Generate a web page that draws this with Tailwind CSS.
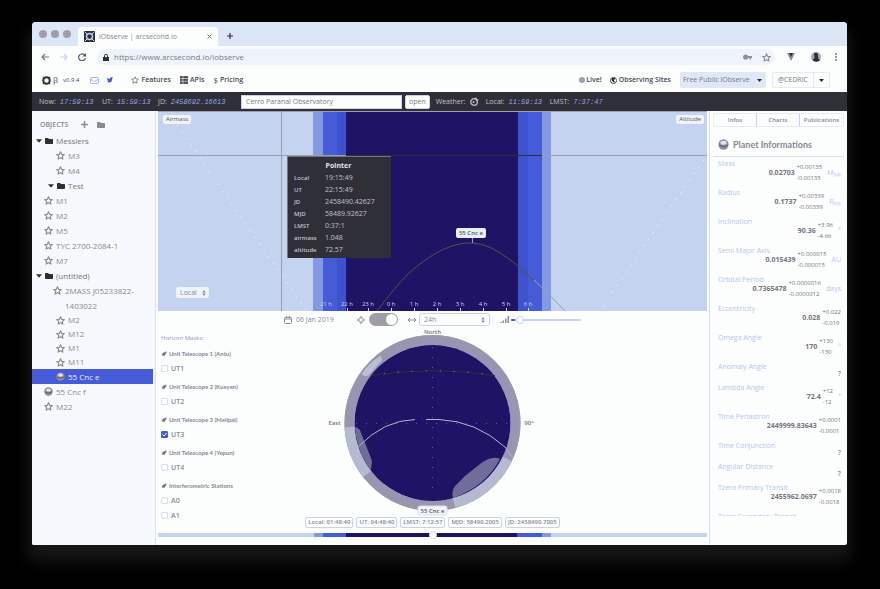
<!DOCTYPE html>
<html lang="en">
<head>
<meta charset="utf-8">
<title>iObserve | arcsecond.io</title>
<script src="https://cdn.jsdelivr.net/npm/@tailwindcss/browser@4"></script>
</head>
<body class="bg-black font-['Open_Sans','Noto_Sans',sans-serif] text-[8px] leading-[10px] text-[#8b8897]">
<svg class="hidden">
  <symbol id="star" viewBox="0 0 16 16"><path d="M8 1.500l2 4.400 4.800.5-3.600 3.200 1 4.800L8 12l-4.200 2.400 1-4.800L1.200 6.400l4.800-.5z" fill="none" stroke="currentColor" stroke-width="2" stroke-linejoin="round"/></symbol>
  <symbol id="folder" viewBox="0 0 16 16"><path d="M0 3.500Q0 2 1.500 2H6l2 2h6.500Q16 4 16 5.500v7q0 1.500-1.500 1.500h-13Q0 14 0 12.500z" fill="currentColor"/></symbol>
  <symbol id="caret" viewBox="0 0 10 6"><path d="M0 0h10L5 6z" fill="currentColor"/></symbol>
  <symbol id="planet" viewBox="0 0 16 16"><circle cx="8" cy="8" r="7.500" fill="#8f8c9b"/><ellipse cx="8" cy="5.500" rx="4.500" ry="3" fill="#dce4f4"/><path d="M2 9q6 4 12 0" stroke="#55535f" stroke-width="1.500" fill="none"/></symbol>
  <symbol id="rocket" viewBox="0 0 16 16"><path d="M15 1Q8 1 5 6L1.500 7 4 9 2 13.500 7 12l2 2.500 1-4Q15 7 15 1z" fill="currentColor"/><circle cx="11" cy="5" r="1.200" fill="#fff"/></symbol>
  <symbol id="updown" viewBox="0 0 6 10"><path d="M0 4h6L3 0zM0 6h6L3 10z" fill="currentColor"/></symbol>
</svg>

<div class="flex h-screen pt-[22px] pr-[33px] pb-11 pl-8">
<div class="flex min-w-0 flex-1 flex-col overflow-hidden rounded-t-[4px] rounded-b-[2px] bg-[#fcfefe] shadow-[0_12px_16px_4px_#171717]">

  <div class="flex h-6 shrink-0 items-end bg-[#dde6f6]">
    <div class="flex gap-1 self-center pl-[7px]">
      <span class="size-2 rounded-full bg-[#a09ca8]"></span><span class="size-2 rounded-full bg-[#a09ca8]"></span><span class="size-2 rounded-full bg-[#a09ca8]"></span>
    </div>
    <div class="ml-[7px] flex h-[19px] w-[140px] items-center rounded-t-[4px] bg-[#fcfefe] px-1.5">
      <svg class="size-[11px]" viewBox="0 0 11 11"><rect width="11" height="11" rx="1" fill="#2f2f38"/><circle cx="5.500" cy="5.500" r="3" fill="none" stroke="#c4d4f0" stroke-width="1.400"/><path d="M1 1l2 2M10 1L8 3M1 10l2-2M10 10L8 8" stroke="#c4d4f0"/></svg>
      <span class="ml-1 flex-1 text-[7px] whitespace-nowrap">iObserve | arcsecond.io</span>
      <button aria-label="Close tab"><svg class="size-[5px]" viewBox="0 0 5 5"><path d="M.5.5l4 4M4.500.5l-4 4" stroke="#77747f"/></svg></button>
    </div>
    <button aria-label="New tab" class="ml-[9px] self-center pt-1"><svg class="size-[6px]" viewBox="0 0 6 6"><path d="M3 0v6M0 3h6" stroke="#2f2f38" stroke-width="1.200"/></svg></button>
  </div>

  <div class="flex h-[22px] shrink-0 items-center pr-2.5 pl-[9px]">
    <svg class="h-2 w-[46px]" viewBox="0 0 46 8" fill="none" stroke-width="1.200"><path d="M8 4H1M4 1L1 4l3 3" stroke="#77747f"/><path d="M19 4h7M23 1l3 3-3 3" stroke="#c4d4f0"/><path d="M43.500 2A3.400 3.400 0 1 0 44.400 5" stroke="#55535f"/><path d="M45 0v3.500h-3.500z" fill="#55535f"/></svg>
    <div class="ml-2.5 flex h-4 flex-1 items-center rounded-full bg-[#eff4fb] pr-1 pl-1.5">
      <svg class="h-[7px] w-[6px]" viewBox="0 0 6 7"><rect y="3" width="6" height="4" fill="#2f2f38"/><path d="M1.500 3V1.800a1.500 1.500 0 0 1 3 0V3" fill="none" stroke="#2f2f38"/></svg>
      <input aria-label="Address" value="https://www.arcsecond.io/iobserve" class="ml-[5px] min-w-0 flex-1 bg-transparent text-[8px] text-[#7b7886] outline-none">
      <svg class="h-[6px] w-[9px]" viewBox="0 0 9 6" fill="#8f8c9b"><circle cx="2.700" cy="3" r="2.600"/><path d="M4 2h5v2H8v1.500H6.500V4H4z"/></svg>
      <svg class="ml-2.5 size-[9px] text-[#8f8c9b]"><use href="#star"/></svg>
    </div>
    <svg class="ml-3 size-[8px]" viewBox="0 0 8 8"><path d="M0 0h8L4 8z" fill="#8f8c9b"/><path d="M2 0h4L4 4z" fill="#2f2f38"/></svg>
    <svg class="ml-4 size-[10px]" viewBox="0 0 10 10"><circle cx="5" cy="5" r="5" fill="#a9a7b3"/><path d="M3 1.500q3-2 4 1V6l2 2.500Q5 11 1.500 8L3.500 6z" fill="#2f2f38"/></svg>
    <svg class="ml-3.5 h-[8px] w-[2px]" viewBox="0 0 2 8" fill="#77747f"><circle cx="1" cy="1" r="1"/><circle cx="1" cy="4" r="1"/><circle cx="1" cy="7" r="1"/></svg>
  </div>

  <nav class="flex h-6 shrink-0 items-center pr-[17px] pl-[10px] text-[7px] font-semibold text-[#4a4855]">
    <svg class="size-[9px]" viewBox="0 0 10 10"><circle cx="5" cy="5" r="3.600" fill="none" stroke="#2f2f38" stroke-width="2.200"/><path d="M1 1l1 1M9 1L8 2M1 9l1-1M9 9L8 8" stroke="#2f2f38" stroke-width="1.200"/></svg>
    <span class="ml-[2px] text-[8px] font-normal">β</span>
    <span class="ml-[5px] text-[6px] font-normal">v0.9.4</span>
    <a href="#" aria-label="Mail" class="ml-[11px]"><svg class="h-[7px] w-[9px]" viewBox="0 0 9 7" fill="none" stroke="#a9b9dd"><rect x=".5" y=".5" width="8" height="6" rx="1"/><path d="M.5 2l4 2.500 4-2.500"/></svg></a>
    <a href="#" aria-label="Twitter" class="ml-2"><svg class="size-[6px]" viewBox="0 0 6 6"><path d="M0 1l2.500 1Q3 0 4.500.3L6 .5 5.200 2Q5 5.500 2 5.500L0 5l1.200-.8Q0 3 0 1z" fill="#455bd8"/></svg></a>
    <a href="#" class="ml-[18px] flex items-center gap-0.5"><svg class="size-[8px] text-[#8b8897]"><use href="#star"/></svg>Features</a>
    <a href="#" class="ml-[9px] flex items-center gap-[2px]"><svg class="size-[8px]" viewBox="0 0 8 8"><path d="M0 0h8v8H0z" fill="#55535f"/><path d="M0 2.500h8M0 5.300h8M3 0v8" stroke="#fff" stroke-width=".5"/></svg>APIs</a>
    <a href="#" class="ml-[9px] flex items-center gap-[2px]"><span class="text-[8px] font-normal">$</span>Pricing</a>
    <span class="flex-1"></span>
    <a href="#" class="flex items-center gap-px"><span class="size-[6px] rounded-full bg-[#a09ca8]"></span>Live!</a>
    <a href="#" class="ml-2 flex items-center gap-[2px]"><svg class="size-[7px]" viewBox="0 0 8 8"><circle cx="4" cy="4" r="3.500" fill="none" stroke="#2f2f38"/><path d="M2 1h4L4.500 4 6 6H4L2 4z" fill="#2f2f38"/></svg>Observing Sites</a>
    <div class="ml-[9px] flex h-4 items-center rounded-[2px] bg-[#dfe8f7] font-normal text-[#7b7886]"><button class="px-[3px] whitespace-nowrap">Free Public iObserve</button><button aria-label="More plans" class="flex h-4 items-center px-1"><svg class="h-[3px] w-[5px] text-[#2f2f38]"><use href="#caret"/></svg></button></div>
    <div class="ml-1.5 flex h-4 items-center rounded-[2px] border border-[#e4ebf7] font-normal text-[#7b7886]"><button class="px-[5px]">@CEDRIC</button><button aria-label="Account menu" class="flex h-3.5 items-center border-l border-[#e4ebf7] px-[5px]"><svg class="h-[3px] w-[5px] text-[#2f2f38]"><use href="#caret"/></svg></button></div>
  </nav>

  <div class="flex h-[19px] shrink-0 items-center bg-[#2f2f38] pl-[7px] text-[7px] whitespace-nowrap text-[#c3c0cb]">
    <div class="flex w-[63px] gap-1">Now: <span class="font-['Liberation_Mono',monospace] italic text-[#98a5e6]">17:59:13</span></div>
    <div class="flex w-[56px] gap-1">UT: <span class="font-['Liberation_Mono',monospace] italic text-[#98a5e6]">15:59:13</span></div>
    <div class="flex w-[83px] gap-1">JD: <span class="font-['Liberation_Mono',monospace] italic text-[#98a5e6]">2458692.16613</span></div>
    <input aria-label="Observatory" value="Cerro Paranal Observatory" class="h-3.5 w-[161px] border border-[#c4d4f0] bg-[#fcfefe] px-1 text-[#7b7886] outline-none">
    <button class="ml-[3px] h-3.5 rounded-[2px] border border-[#c4d4f0] bg-[#fcfefe] px-[3px] text-[#7b7886]">open</button>
    <div class="ml-1.5 flex w-[50px] items-center gap-[5px]">Weather: <svg class="size-[9px]" viewBox="0 0 9 9"><circle cx="4" cy="5" r="3.300" fill="none" stroke="#c3c0cb" stroke-width="1.300"/><path d="M4 2q1-2 3-1.500L6 2l3 .5L7 4z" fill="#c3c0cb"/><circle cx="3.500" cy="5" r="1" fill="#c3c0cb"/></svg></div>
    <div class="flex w-[64px] gap-1">Local: <span class="font-['Liberation_Mono',monospace] italic text-[#98a5e6]">11:59:13</span></div>
    <div class="flex gap-1">LMST: <span class="font-['Liberation_Mono',monospace] italic text-[#98a5e6]">7:37:47</span></div>
  </div>

  <div class="flex min-h-0 flex-1">
    <aside class="w-[124px] shrink-0 border-r border-[#d5e0f4] bg-[#f5f8fd] pt-2 pr-[2px]">
      <div class="flex h-[11px] items-center pl-2 text-[7px] font-semibold"><span class="w-[41px]">OBJECTS</span>
        <button aria-label="Add object"><svg class="size-[7px]" viewBox="0 0 7 7"><path d="M3.500 0v7M0 3.500h7" stroke="currentColor" stroke-width="1.500"/></svg></button>
        <button aria-label="Add folder" class="ml-[9px]"><svg class="size-[8px]"><use href="#folder"/></svg></button></div>
      <ul id="tree" class="mt-[3px] text-[8px]"></ul>
    </aside>

    <main class="flex min-w-0 flex-1 flex-col px-[2px]">
      <div class="relative">
        <svg class="block w-full" viewBox="0 0 549 200" fill="none">
          <path fill="#c4d4f0" d="M0 0h549v200H0z"/>
          <path fill="#8498e4" d="M155 0h238v200H155z"/><path fill="#455bd8" d="M165 0h219v200H165z"/><path fill="#3f52cd" d="M179 0h191v200H179z"/><path fill="#1f1366" d="M188 0h172v200H188z"/>
          <path d="M19 14L44 50 70 88 96 125 123 163 148 199M546 49L515 92 501 113 474 153 442 199" stroke="#fcfefe" stroke-dasharray="1 7"/>
          <path d="M123.500 0v200M0 44.500h188M384 44.500h165M0 .5h549" stroke="#a09ca8"/><path d="M188 44.500h196" stroke="#2f2f38"/>
          <path d="M219 200C232 183 241 172 250 163Q285 131 314 132Q331 132 355 151L376 169" stroke="#55533f"/><path d="M376 169Q392 184 407 200" stroke="#a09ca8"/>
          <path d="M314.500 126v6" stroke="#a09ca8"/>
          <path d="M189.500 197v3M210.500 197v3M233.500 197v3M256.500 197v3M279.500 197v3M302.500 197v3M325.500 197v3M348.500 197v3M370.500 197v3" stroke="#c4d4f0"/>
          <g fill="#c4d4f0" font-size="6" text-anchor="middle"><text x="168" y="195">21 h</text><text x="189" y="195">22 h</text><text x="210" y="195">23 h</text><text x="233" y="195">0 h</text><text x="256" y="195">1 h</text><text x="279" y="195">2 h</text><text x="302" y="195">3 h</text><text x="325" y="195">4 h</text><text x="348" y="195">5 h</text><text x="370" y="195">6 h</text></g>
        </svg>
        <span class="absolute top-1 left-[5px] rounded-[2px] bg-[#eff4fb] px-[3px] text-[6px] leading-[9px] text-[#55535f]">Airmass</span>
        <span class="absolute top-1 right-[3px] rounded-[2px] bg-[#eff4fb] px-[3px] text-[6px] leading-[9px] text-[#55535f]">Altitude</span>
        <span class="absolute top-[117px] left-[57%] -translate-x-1/2 rounded-[2px] bg-[#e8eef9] px-[3px] text-[6px] leading-[10px] font-semibold whitespace-nowrap text-[#55535f]">55 Cnc e</span>
        <div class="absolute bottom-[13px] left-[18px] flex h-[11px] items-center rounded-[3px] bg-[#eff4fb] pr-[3px] pl-1">
          <select aria-label="Time scale" class="w-[22px] appearance-none text-[7px] leading-[10px] outline-none"><option>Local</option></select><svg class="h-[6px] w-[4px]"><use href="#updown"/></svg></div>
        <div class="absolute top-[45px] left-[129px] w-[104px] border-t border-l border-[#77747f] bg-[#2f2f38] pt-[3px] pb-[2px] pl-1.5 leading-3 text-[#c3c0cb]">
          <div class="pr-2 text-center text-[7px] font-bold text-[#dce4f4]">Pointer</div>
          <table class="w-full text-left text-[7px]">
            <tr><th class="w-[31px] text-[6px] font-semibold">Local</th><td>19:15:49</td></tr>
            <tr><th class="text-[6px] font-semibold">UT</th><td>22:15:49</td></tr>
            <tr><th class="text-[6px] font-semibold">JD</th><td>2458490.42627</td></tr>
            <tr><th class="text-[6px] font-semibold">MJD</th><td>58489.92627</td></tr>
            <tr><th class="text-[6px] font-semibold">LMST</th><td>0:37:1</td></tr>
            <tr><th class="text-[6px] font-semibold">airmass</th><td>1.048</td></tr>
            <tr><th class="text-[6px] font-semibold">altitude</th><td>72.57</td></tr>
          </table>
        </div>
      </div>

      <div class="flex h-[17px] shrink-0 items-center pl-[126px] text-[7px]">
        <svg class="size-[8px]" viewBox="0 0 8 8" fill="none" stroke="#8f8c9b"><rect x=".5" y="1.500" width="7" height="6" rx="1"/><path d="M.5 3h7M2.500 0v2M5.500 0v2"/></svg>
        <button class="ml-1 w-[61px] text-left">06 Jan 2019</button>
        <svg class="size-[8px]" viewBox="0 0 8 8" fill="none" stroke="#8f8c9b"><circle cx="4" cy="4" r="2.300"/><path d="M4 0v2M4 6v2M0 4h2M6 4h2"/></svg>
        <label class="ml-1 flex"><input type="checkbox" checked aria-label="Follow pointer" class="peer sr-only"><span class="flex h-[13px] w-[29px] justify-end rounded-full bg-[#a09ca8] p-px"><span class="size-[11px] rounded-full bg-[#fcfefe]"></span></span></label>
        <svg class="ml-2.5 h-[6px] w-[8px]" viewBox="0 0 8 6" stroke="#8f8c9b" fill="none"><path d="M0 3h8M2 1L0 3l2 2M6 1l2 2-2 2"/></svg>
        <div class="ml-[3px] flex h-[13px] w-[71px] items-center rounded-[3px] border border-[#c4d4f0] px-1"><select aria-label="Range" class="min-w-0 flex-1 appearance-none outline-none"><option>24h</option></select><svg class="h-[6px] w-[4px]"><use href="#updown"/></svg></div>
        <svg class="ml-2.5 h-[7px] w-[9px]" viewBox="0 0 9 7" fill="#8f8c9b"><path d="M0 6h1.500v1H0zM2.500 4.500H4V7H2.500zM5 2.500h1.500V7H5zM7.500 0H9v7H7.500z"/></svg>
        <input type="range" aria-label="Brightness" min="0" max="100" value="8" class="ml-[2px] h-[2px] w-[70px] appearance-none rounded-full bg-[linear-gradient(90deg,#455bd8_6%,#c4d4f0_6%)] [&::-webkit-slider-thumb]:size-2 [&::-webkit-slider-thumb]:appearance-none [&::-webkit-slider-thumb]:rounded-full [&::-webkit-slider-thumb]:border [&::-webkit-slider-thumb]:border-[#c4d4f0] [&::-webkit-slider-thumb]:bg-white">
      </div>

      <div class="grid grid-cols-[1fr_211px_1fr]">
        <div id="masks" class="pt-[3px] pl-[3px] text-[7px]"></div>
        <div>
        <svg class="block w-full" viewBox="0 0 211 188" fill="none">
          <circle cx="105.500" cy="95" r="83" stroke="#9795b1" stroke-width="10"/>
          <circle cx="105.500" cy="95" r="87.500" stroke="#a09ca8"/>
          <circle cx="105.500" cy="95" r="78" fill="#1f1366"/>
          <path d="M22.600 99A83 83 0 0 0 40 146M180.500 131A83 83 0 0 1 127 175" stroke="#b3bad2" stroke-width="10"/>
          <path d="M35 46Q41 35 54 27.500L55 32 42 47Q38 50 35 46z" fill="#b9c0d6"/>
          <path d="M28 99q5 1 6 6l6 15 5 13-1 9q-14-17-16-43zM173 131q-8-4-20 5l-15 12-10 10q-4 6-2 12 32-11 47-39z" fill="#6f6e98"/>
          <path d="M105.500 19v150M29 95.500h153" stroke="#455bd8" stroke-dasharray="1 9"/>
          <path d="M43 47.500Q105 38 168 47.500" stroke="#2f2f38"/><path d="M43 47.500Q105 38 168 47.500" stroke="#a09c88" stroke-dasharray="1 13"/>
          <path d="M31 119Q57 92 88 91.500M99 91.500H112Q149 93 178 119L186 130" stroke="#b3b5c6"/>
          <g fill="#77747f" font-size="6" font-weight="600" text-anchor="middle"><text x="105.500" y="6">North</text><text x="7.500" y="97">East</text><text x="202" y="97">90°</text></g>
          <rect x="91" y="178" width="29" height="9" rx="2" fill="#f1f4fb" stroke="#d5e0f4"/>
          <text x="105.500" y="185" fill="#55535f" font-size="6" font-weight="600" text-anchor="middle">55 Cnc e</text>
        </svg>
        <div class="mt-px flex justify-center gap-[3px] text-[6px] leading-[9px] font-semibold whitespace-nowrap">
          <span class="rounded-[2px] border border-[#c4d4f0] px-[2px]">Local: 01:48:40</span><span class="rounded-[2px] border border-[#c4d4f0] px-[2px]">UT: 04:48:40</span><span class="rounded-[2px] border border-[#c4d4f0] px-[2px]">LMST: 7:12:57</span><span class="rounded-[2px] border border-[#c4d4f0] px-[2px]">MJD: 58490.2005</span><span class="rounded-[2px] border border-[#c4d4f0] px-[2px]">JD: 2458490.7005</span>
        </div>
        </div>
      </div>

      <input type="range" aria-label="Time of night" min="0" max="100" value="50" class="mt-auto mb-[6px] h-2 w-full shrink-0 appearance-none bg-transparent [&::-webkit-slider-runnable-track]:h-1 [&::-webkit-slider-runnable-track]:bg-[linear-gradient(90deg,#c4d4f0_28.5%,#8498e4_28.5%_30%,#455bd8_30%_34.300%,#1f1366_34.300%_65.400%,#455bd8_65.400%_70%,#8498e4_70%_71.600%,#c4d4f0_71.600%)] [&::-webkit-slider-thumb]:-mt-[2px] [&::-webkit-slider-thumb]:size-2 [&::-webkit-slider-thumb]:appearance-none [&::-webkit-slider-thumb]:rounded-full [&::-webkit-slider-thumb]:border [&::-webkit-slider-thumb]:border-[#d5e0f4] [&::-webkit-slider-thumb]:bg-white">
    </main>

    <aside class="flex w-[138px] shrink-0 flex-col border-l border-[#d5e0f4] pt-[2px] pb-[29px]">
      <div class="mx-[3px] grid h-3.5 shrink-0 grid-cols-3 divide-x divide-[#c4d4f0] rounded-[2px] border border-[#e4ebf7] text-center text-[6px] font-semibold"><button>Infos</button><button>Charts</button><button>Publications</button></div>
      <h2 class="mx-[3px] flex h-[30px] shrink-0 items-center gap-1 border-b border-[#d5e0f4] pt-[6px] pl-[5px] font-[Lato,sans-serif] text-[9px] font-bold"><svg class="size-[11px]"><use href="#planet"/></svg>Planet Informations</h2>
      <dl id="infos" class="min-h-0 overflow-hidden pt-px pr-1.5 pl-2 text-[7px]"></dl>
    </aside>
  </div>
</div>
</div>

<script>
const folder = (n, pad) => `<li class="flex h-[15px] items-center ${pad} text-[#77747f]"><svg class="h-[4px] w-[6px] text-[#2f2f38]"><use href="#caret"/></svg><svg class="mr-[3px] ml-[3px] size-[8px] text-[#2f2f38]"><use href="#folder"/></svg>${n}</li>`;
const leaf = (n, pad, row = 'h-[15px]', icon = 'star') => `<li class="flex ${row} items-center ${pad} whitespace-nowrap"><svg class="mr-[3px] size-[9px]"><use href="#${icon}"/></svg>${n}</li>`;
document.getElementById('tree').innerHTML = [
  folder('Messiers', 'pl-1'), leaf('M3', 'pl-6'), leaf('M4', 'pl-6'), folder('Test', 'pl-4'),
  leaf('M1', 'pl-3'), leaf('M2', 'pl-3'), leaf('M5', 'pl-3'), leaf('TYC 2700-2084-1', 'pl-3'), leaf('M7', 'pl-3'),
  folder('(untitled)', 'pl-1'),
  `<li class="flex pl-[21px] leading-[15px]"><svg class="mt-[3px] mr-[3px] size-[9px] shrink-0"><use href="#star"/></svg><span>2MASS J05233822-<br>1403022</span></li>`,
  leaf('M2', 'pl-6', 'h-3.5'), leaf('M12', 'pl-6', 'h-3.5'), leaf('M1', 'pl-6', 'h-3.5'), leaf('M11', 'pl-6', 'h-3.5'),
  leaf('55 Cnc e', 'pl-6', 'h-[15px] bg-[#455bd8] text-[#e8eef9]', 'planet'),
  leaf('55 Cnc f', 'pl-3', 'h-[15px]', 'planet'), leaf('M22', 'pl-3')
].join('');

const masks = [['Unit Telescope 1 (Antu)', 'UT1'], ['Unit Telescope 2 (Kueyen)', 'UT2'], ['Unit Telescope 3 (Melipal)', 'UT3'], ['Unit Telescope 4 (Yepun)', 'UT4'], ['Interferometric Stations', 'A0', 'A1']];
document.getElementById('masks').innerHTML = `<p class="mb-0.5 text-[6px] leading-[14px] text-[#8c9bbd]">Horizon Masks:</p>` + masks.map(([t, ...c]) =>
  `<fieldset class="mb-1"><legend class="flex h-[14px] items-center gap-[2px] font-[Lato,sans-serif] text-[6px] font-bold whitespace-nowrap"><svg class="size-[6px] text-[#77747f]"><use href="#rocket"/></svg>${t}</legend>` +
  c.map(n => `<label class="flex h-[15px] items-center gap-[3px] font-semibold"><span class="grid items-center"><input type="checkbox" ${n === 'UT3' ? 'checked' : ''} class="peer size-[7px] appearance-none rounded-[1px] border border-[#d5e0f4] [grid-area:1/1] checked:border-[#455bd8] checked:bg-[#455bd8]"><svg class="invisible size-[7px] [grid-area:1/1] peer-checked:visible" viewBox="0 0 7 7"><path d="M1.500 3.500L3 5l2.500-3" fill="none" stroke="#fff"/></svg></span>${n}</label>`).join('') + `</fieldset>`).join('');

const infos = [['Mass', '0.02703', '+0.00135', '-0.00135', 'M<sub class="text-[5px]">Jup</sub>'], ['Radius', '0.1737', '+0.00339', '-0.00339', 'R<sub class="text-[5px]">Jup</sub>'], ['Inclination', '90.36', '+3.96', '-4.66', '°'], ['Semi Major Axis', '0.015439', '+0.000015', '-0.000015', 'AU'], ['Orbital Period', '0.7365478', '+0.0000016', '-0.0000012', 'days'], ['Eccentricity', '0.028', '+0.022', '-0.019', ''], ['Omega Angle', '170', '+130', '-130', '°'], ['Anomaly Angle'], ['Lambda Angle', '72.4', '+12', '-12', '°'], ['Time Periastron', '2449999.83643', '+0.0001', '-0.0001', ''], ['Time Conjunction'], ['Angular Distance'], ['Tzero Primary Transit', '2455962.0697', '+0.0018', '-0.0018', ''], ['Tzero Secondary Transit', '', '', '', '']];
document.getElementById('infos').innerHTML = infos.map(([l, v, up, dn, u]) =>
  `<div class="grid"><dt class="pt-px [grid-area:1/1] text-[#b3c6ea]">${l}</dt>` + (v === undefined
    ? `<dd class="mt-[8px] mb-[3px] text-right font-semibold [grid-area:1/1]">?</dd>`
    : `<dd class="mt-1 mb-[3px] flex h-[22px] items-center justify-end gap-[2px] text-[#77747f] [grid-area:1/1]"><b>${v}</b><span class="text-[6px] leading-[11px]">${up}<br>${dn}</span>${u ? `<span class="ml-[3px] text-[#b3c6ea]">${u}</span>` : ''}</dd>`) + `</div>`).join('');
</script>
</body>
</html>
